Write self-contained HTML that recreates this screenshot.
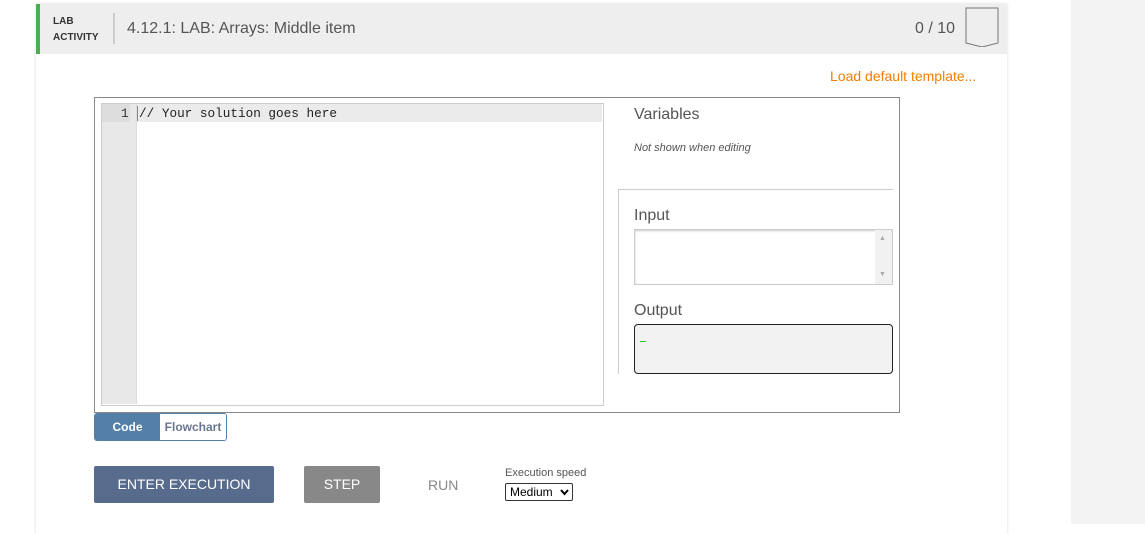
<!DOCTYPE html>
<html><head><style>
body{margin:0;width:1145px;height:524px;background:#fff;font-family:"Liberation Sans",sans-serif;position:relative;overflow:hidden}
.a{position:absolute}
</style></head><body>
<div class="a" style="left:1071px;top:0;width:74px;height:524px;background:#f3f3f3"></div>
<div class="a" style="left:36px;top:4px;width:971px;height:530px;background:#fff;box-shadow:0 0 3px rgba(0,0,0,.15)"></div>
<div class="a" style="left:36px;top:4px;width:971px;height:50px;background:#eeeeee"></div>
<div class="a" style="left:36px;top:4px;width:4px;height:50px;background:#4caf50"></div>
<div class="a" style="left:53px;top:14px;font-size:10px;font-weight:bold;color:#333;line-height:16px">LAB<br>ACTIVITY</div>
<div class="a" style="left:113px;top:13px;width:2px;height:31px;background:#ccc"></div>
<div class="a" style="left:127px;top:20px;font-size:16px;color:#555">4.12.1: LAB: Arrays: Middle item</div>
<div class="a" style="left:915px;top:20px;font-size:16px;color:#555">0 / 10</div>
<svg class="a" style="left:965px;top:7px" width="34" height="40"><path d="M1 1H33V36L17 40L1 36Z" fill="none" stroke="#777" stroke-width="1"/></svg>
<div class="a" style="left:830px;top:68px;font-size:14px;color:#f57c00">Load default template...</div>
<div class="a" style="left:94px;top:97px;width:804px;height:314px;border:1px solid #888"></div>
<div class="a" style="left:101px;top:103px;width:501px;height:301px;border:1px solid #ccc"></div>
<div class="a" style="left:102px;top:104px;width:34px;height:300px;background:#e8e8e8;border-right:1px solid #ddd"></div>
<div class="a" style="left:137px;top:104px;width:465px;height:18px;background:#ebebeb"></div>
<div class="a" style="left:102px;top:104px;width:28px;height:18px;background:#ddd"></div>
<div class="a" style="left:121px;top:106px;font-family:'Liberation Mono',monospace;font-size:12.7px;color:#333">1</div>
<div class="a" style="left:137px;top:106px;font-family:'Liberation Mono',monospace;font-size:12.7px;color:#222;border-left:1px solid #888;padding-left:1px;line-height:15px">// Your solution goes here</div>
<div class="a" style="left:634px;top:106px;font-size:16px;color:#555">Variables</div>
<div class="a" style="left:634px;top:142px;font-size:11px;font-style:italic;color:#555">Not shown when editing</div>
<div class="a" style="left:618px;top:189px;width:275px;height:1px;background:#ccc"></div>
<div class="a" style="left:618px;top:189px;width:1px;height:185px;background:#ccc"></div>
<div class="a" style="left:634px;top:207px;font-size:16px;color:#555">Input</div>
<div class="a" style="left:634px;top:229px;width:257px;height:54px;border:1px solid #ccc;box-shadow:inset 0 1px 2px #ccc"></div>
<div class="a" style="left:875px;top:230px;width:16px;height:54px;background:#f1f1f1"></div>
<div class="a" style="left:879px;top:235px;font-size:7px;color:#aaa">▲</div>
<div class="a" style="left:879px;top:271px;font-size:7px;color:#aaa">▼</div>
<div class="a" style="left:634px;top:302px;font-size:16px;color:#555">Output</div>
<div class="a" style="left:634px;top:324px;width:257px;height:48px;border:1px solid #222;border-radius:4px;background:#f2f2f2"></div>
<div class="a" style="left:640px;top:341px;width:6px;height:1px;background:#2c2"></div>
<div class="a" style="left:94px;top:413px;width:131px;height:26px;border:1px solid #5480a8;border-radius:3px;overflow:hidden;font-size:12px;font-weight:bold">
<div class="a" style="left:0;top:0;width:65px;height:26px;background:#5480a8;color:#fff;text-align:center;line-height:26px">Code</div>
<div class="a" style="left:65px;top:0;width:66px;height:26px;background:#fff;color:#6a7590;text-align:center;line-height:26px">Flowchart</div>
</div>
<div class="a" style="left:94px;top:466px;width:180px;height:37px;background:#576b8c;border-radius:2px;color:#fff;font-size:14px;text-align:center;line-height:37px">ENTER EXECUTION</div>
<div class="a" style="left:304px;top:466px;width:76px;height:37px;background:#888;border-radius:2px;color:#fff;font-size:14px;text-align:center;line-height:37px">STEP</div>
<div class="a" style="left:428px;top:477px;font-size:14px;color:#888">RUN</div>
<div class="a" style="left:505px;top:467px;font-size:11px;color:#555">Execution speed</div>
<div class="a" style="left:505px;top:483px;width:66px;height:16px;border:1px solid #333;border-radius:2px;font-size:12px;line-height:16px;color:#000"><span style="padding-left:4px">Medium</span><svg class="a" style="left:54px;top:5px" width="9" height="7"><path d="M1 1L4.5 5L8 1" fill="none" stroke="#000" stroke-width="2"/></svg></div>
</body></html>
